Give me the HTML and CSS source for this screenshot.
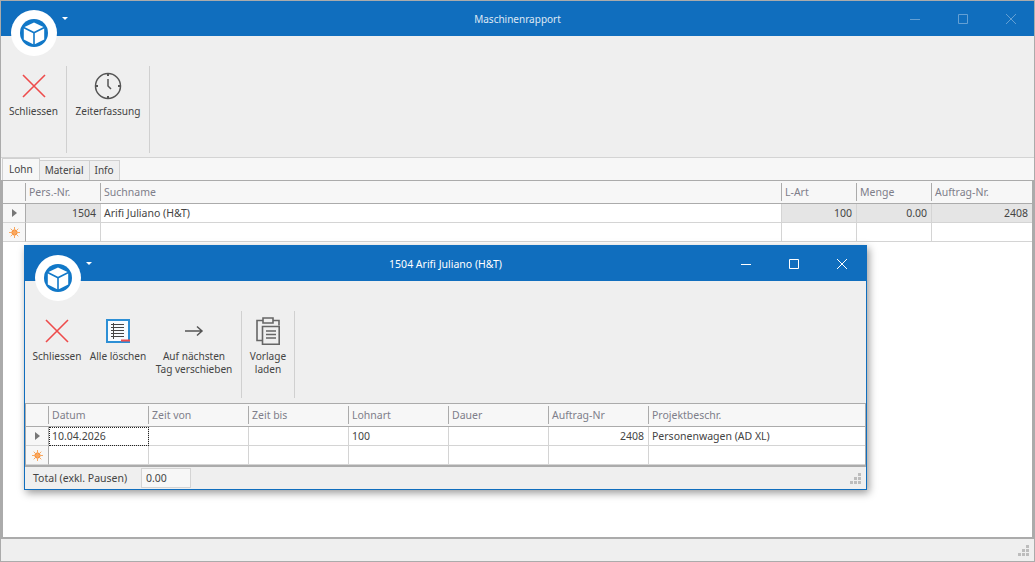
FILE: index.html
```html
<!DOCTYPE html>
<html lang="de">
<head>
    <meta charset="UTF-8">
    <title>Maschinenrapport</title>
    <link rel="stylesheet" href="styles.css">
</head>
<body>
    <svg class="sprites" width="0" height="0">
        <symbol id="logo" viewBox="0 0 46 46">
            <circle cx="23" cy="23" r="23" fill="#fff"/>
            <circle cx="23" cy="23" r="14" fill="#1178c8"/>
            <path d="M23 12.5l9.5 4.6-9.5 4.6-9.5-4.6z" fill="#fff"/>
            <path d="M12.8 18.6l9.4 4.6v11l-9.4-4.7zM33.2 18.6l-9.4 4.6v11l9.4-4.7z" fill="#fff"/>
        </symbol>
        <symbol id="close-red" viewBox="0 0 24 24">
            <path d="M1 1l22 22M23 1L1 23" fill="none" stroke="#ee4b4b" stroke-width="1.6"/>
        </symbol>
        <symbol id="row-arrow" viewBox="0 0 5 8">
            <path d="M0 0l5 4-5 4z" fill="#777"/>
        </symbol>
        <symbol id="row-new" viewBox="0 0 11 11">
            <circle cx="5.5" cy="5.5" r="3" fill="#f7913a"/>
            <path d="M5.5 0v11M0 5.5h11M1.7 1.7l7.6 7.6M9.3 1.7l-7.6 7.6" stroke="#f9a860" stroke-width="1"/>
        </symbol>
        <symbol id="grip" viewBox="0 0 11 11">
            <path d="M8 0h3v3H8zM4 4h3v3H4zM8 4h3v3H8zM0 8h3v3H0zM4 8h3v3H4zM8 8h3v3H8z" fill="#bdbdbd"/>
        </symbol>
    </svg>

    <div class="window">
        <header class="titlebar main-title">
            <svg class="logo"><use href="#logo"/></svg>
            <span class="qat-arrow"></span>
            <span class="title">Maschinenrapport</span>
            <div class="win-buttons dim">
                <svg viewBox="0 0 10 10"><path d="M0 5.5h10" stroke="#fff"/></svg>
                <svg viewBox="0 0 10 10"><path d="M.5.5h9v9h-9z" fill="none" stroke="#fff"/></svg>
                <svg viewBox="0 0 10 10"><path d="M0 0l10 10M10 0L0 10" stroke="#fff"/></svg>
            </div>
        </header>

        <div class="ribbon main-ribbon">
            <div class="group">
                <button class="big-btn btn-close">
                    <svg class="icon"><use href="#close-red"/></svg>
                    <span>Schliessen</span>
                </button>
            </div>
            <div class="group">
                <button class="big-btn btn-time">
                    <svg class="icon clock" viewBox="0 0 28 28">
                        <circle cx="14" cy="14" r="12.5" fill="none" stroke="#555" stroke-width="1.5"/>
                        <path d="M14 1v3M14 24v3M1 14h3M24 14h3" stroke="#555" stroke-width="2"/>
                        <path d="M14 7v7l3 3" fill="none" stroke="#555" stroke-width="1.5"/>
                    </svg>
                    <span>Zeiterfassung</span>
                </button>
            </div>
        </div>

        <div class="tabs">
            <div class="tab active">Lohn</div>
            <div class="tab">Material</div>
            <div class="tab">Info</div>
        </div>

        <div class="grid-area">
            <table class="grid outer-grid">
                <colgroup>
                    <col class="c-ind"><col style="width:75px"><col><col style="width:75px"><col style="width:75px"><col style="width:100px">
                </colgroup>
                <thead>
                    <tr><th></th><th>Pers.-Nr.</th><th>Suchname</th><th>L-Art</th><th>Menge</th><th>Auftrag-Nr.</th></tr>
                </thead>
                <tbody>
                    <tr>
                        <td class="ind"><svg class="arrow"><use href="#row-arrow"/></svg></td>
                        <td class="num ro">1504</td><td>Arifi Juliano (H&amp;T)</td>
                        <td class="num ro">100</td><td class="num ro">0.00</td><td class="num ro">2408</td>
                    </tr>
                    <tr>
                        <td class="ind"><svg class="star"><use href="#row-new"/></svg></td>
                        <td></td><td></td><td></td><td></td><td></td>
                    </tr>
                </tbody>
            </table>
        </div>

        <footer class="statusbar">
            <svg class="grip"><use href="#grip"/></svg>
        </footer>
    </div>

    <!-- Detailfenster -->
    <div class="dialog">
        <header class="titlebar dialog-title">
            <svg class="logo"><use href="#logo"/></svg>
            <span class="qat-arrow"></span>
            <span class="title">1504 Arifi Juliano (H&amp;T)</span>
            <div class="win-buttons">
                <svg viewBox="0 0 10 10"><path d="M0 5.5h10" stroke="#fff"/></svg>
                <svg viewBox="0 0 10 10"><path d="M.5.5h9v9h-9z" fill="none" stroke="#fff"/></svg>
                <svg viewBox="0 0 10 10"><path d="M0 0l10 10M10 0L0 10" stroke="#fff"/></svg>
            </div>
        </header>

        <div class="ribbon dialog-ribbon">
            <div class="group">
                <button class="big-btn d-close">
                    <svg class="icon"><use href="#close-red"/></svg>
                    <span>Schliessen</span>
                </button>
                <button class="big-btn d-clear">
                    <svg class="icon" viewBox="0 0 24 24">
                        <path d="M1 1h22v22H1z" fill="#f7fbfe" stroke="#2d8fd5" stroke-width="2"/>
                        <path d="M5 5.5h13M5 8.5h13M5 11.5h13M5 14.5h13M5 17.5h13M7.5 4v16" stroke="#444"/>
                        <path d="M15 21.5h9" stroke="#ee4b4b" stroke-width="2"/>
                    </svg>
                    <span>Alle löschen</span>
                </button>
                <button class="big-btn d-move">
                    <svg class="icon" viewBox="0 0 24 24">
                        <path d="M3 12h17M15 7.5l5 4.5-5 4.5" fill="none" stroke="#555" stroke-width="1.5"/>
                    </svg>
                    <span>Auf nächsten<br>Tag verschieben</span>
                </button>
            </div>
            <div class="group">
                <button class="big-btn d-load">
                    <svg class="icon clip" viewBox="0 0 24 28">
                        <path d="M7 3.5H1v20h5" fill="none" stroke="#666" stroke-width="1.6"/>
                        <path d="M17 3.5h6v5" fill="none" stroke="#666" stroke-width="1.6"/>
                        <path d="M7 1h10v5H7z" fill="none" stroke="#666" stroke-width="1.6"/>
                        <path d="M6.5 9.5h16.7v17.7H6.5z" fill="none" stroke="#666" stroke-width="1.6"/>
                        <path d="M10 14h10M10 17.5h10M10 21h10" stroke="#666" stroke-width="1.4"/>
                    </svg>
                    <span>Vorlage<br>laden</span>
                </button>
            </div>
        </div>

        <div class="dialog-grid">
            <table class="grid">
                <colgroup>
                    <col class="c-ind"><col span="6" style="width:100px"><col>
                </colgroup>
                <thead>
                    <tr><th></th><th>Datum</th><th>Zeit von</th><th>Zeit bis</th><th>Lohnart</th><th>Dauer</th><th>Auftrag-Nr</th><th>Projektbeschr.</th></tr>
                </thead>
                <tbody>
                    <tr>
                        <td class="ind"><svg class="arrow"><use href="#row-arrow"/></svg></td>
                        <td class="focused">10.04.2026</td><td></td><td></td><td>100</td><td></td>
                        <td class="num">2408</td><td>Personenwagen (AD XL)</td>
                    </tr>
                    <tr>
                        <td class="ind"><svg class="star"><use href="#row-new"/></svg></td>
                        <td></td><td></td><td></td><td></td><td></td><td></td><td></td>
                    </tr>
                </tbody>
            </table>
        </div>

        <div class="dialog-footer">
            <span class="total-label">Total (exkl. Pausen)</span>
            <span class="total-box">0.00</span>
            <svg class="grip"><use href="#grip"/></svg>
        </div>
    </div>
</body>
</html>
```

FILE: styles.css
```css
* {
    box-sizing: border-box;
}
html, body {
    margin: 0;
    height: 562px;
    overflow: hidden;
}
body {
    position: relative;
    font-family: "Noto Sans", sans-serif;
    font-size: 10.5px;
    color: #444;
    background: #fff;
}
.sprites {
    position: absolute;
}
.window {
    height: 562px;
    display: flex;
    flex-direction: column;
    border: 1px solid #ababab;
    background: #fff;
}

/* Titelleiste */
.titlebar {
    position: relative;
    flex: none;
    height: 35px;
    background: #106ebe;
    display: flex;
    align-items: center;
    justify-content: center;
    color: #fff;
}
.main-title .title {
    font-size: 10px;
    opacity: 0.85;
}
.logo {
    position: absolute;
    left: 10px;
    top: 9px;
    width: 46px;
    height: 46px;
    z-index: 2;
}
.qat-arrow {
    position: absolute;
    left: 61px;
    top: 16px;
    border: 3px solid transparent;
    border-top-color: #fff;
    border-bottom-width: 0;
    border-left-width: 3.5px;
    border-right-width: 3.5px;
}
.win-buttons {
    position: absolute;
    right: 19px;
    top: 13px;
    display: flex;
    gap: 38px;
}
.win-buttons.dim {
    right: 18px;
}
.win-buttons svg {
    width: 10px;
    height: 10px;
    display: block;
}
.win-buttons.dim svg {
    opacity: 0.35;
}

/* Ribbon */
.ribbon {
    flex: none;
    display: flex;
    background: #efefef;
    padding-top: 30px;
    border-bottom: 1px solid #d4d4d4;
    font-size: 10.1px;
}
.main-ribbon {
    height: 122px;
}
.group {
    height: 87px;
    display: flex;
    border-right: 1px solid #d0d0d0;
    align-items: flex-start;
}
.big-btn {
    border: 0;
    background: none;
    padding: 0;
    font: inherit;
    color: inherit;
    line-height: 13px;
    text-align: center;
    white-space: nowrap;
    display: flex;
    flex-direction: column;
    align-items: center;
}
.big-btn .icon {
    display: block;
    width: 24px;
    height: 24px;
    margin-top: 8px;
    margin-bottom: 7px;
}
.big-btn .clock {
    width: 28px;
    height: 28px;
    margin-top: 6px;
    margin-bottom: 5px;
}
.big-btn .clip {
    width: 24px;
    height: 28px;
    margin-top: 6px;
    margin-bottom: 5px;
}
.btn-close {
    width: 65px;
}
.btn-time {
    width: 82px;
}

/* Tabs */
.tabs {
    flex: none;
    height: 22px;
    display: flex;
    align-items: flex-end;
    padding-left: 1px;
    background: #f7f7f7;
    font-size: 10px;
}
.tab {
    height: 20px;
    padding: 0 5px;
    line-height: 18px;
    background: #efefef;
    border: 1px solid #d0d0d0;
    border-bottom: 0;
    border-left: 0;
}
.tab.active {
    height: 22px;
    padding: 0 6px;
    line-height: 20px;
    background: #f7f7f7;
    border-left: 1px solid #d0d0d0;
}

/* Grid */
.grid-area {
    flex: 1;
    border: 2px solid #ababab;
    border-top-width: 1px;
    background: #fff;
}
.grid {
    width: 100%;
    border-collapse: separate;
    border-spacing: 0;
    table-layout: fixed;
}
.c-ind {
    width: 23px;
}
.grid th {
    height: 23px;
    padding: 0 3px;
    background: #f7f7f7;
    border-bottom: 1px solid #ababab;
    font-weight: normal;
    text-align: left;
    color: #7e7e8a;
    position: relative;
}
.grid th + th::before {
    content: "";
    position: absolute;
    left: -1px;
    top: 2px;
    bottom: 2px;
    width: 1px;
    background: #ababab;
}
.grid td {
    height: 19px;
    padding: 0 3px;
    border-right: 1px solid #d4d4d4;
    border-bottom: 1px solid #d4d4d4;
    white-space: nowrap;
    overflow: hidden;
}
.grid td.ind {
    background: #f7f7f7;
    border-right-color: #ababab;
    text-align: center;
    padding: 0;
}
.grid td:last-child {
    border-right: 0;
}
.grid td.num {
    text-align: right;
    padding-right: 4px;
}
.grid td.ro {
    background: #e5e5e5;
}
.grid td.focused {
    outline: 1px dotted #222;
    outline-offset: -1px;
}
.arrow {
    width: 5px;
    height: 8px;
    display: block;
    margin: 0 auto;
}
.star {
    width: 11px;
    height: 11px;
    display: block;
    margin: 0 auto;
}

/* Statusleiste */
.statusbar {
    flex: none;
    position: relative;
    height: 22px;
    background: #efefef;
}
.grip {
    position: absolute;
    right: 5px;
    bottom: 5px;
    width: 11px;
    height: 11px;
}

/* Detailfenster */
.dialog {
    position: absolute;
    left: 24px;
    top: 245px;
    width: 843px;
    height: 245px;
    display: flex;
    flex-direction: column;
    background: #efefef;
    border: 1px solid #106ebe;
    box-shadow: 2px 3px 8px rgba(0, 0, 0, 0.4);
}
.dialog-ribbon {
    height: 122px;
    border-bottom: 0;
}
.d-close {
    width: 64px;
}
.d-clear {
    width: 58px;
}
.d-move {
    width: 94px;
}
.d-load {
    width: 52px;
}
.dialog-grid {
    flex: none;
    height: 64px;
    border: 1px solid #ababab;
    border-bottom-width: 2px;
    background: #fff;
}
.dialog-footer {
    flex: 1;
    position: relative;
    display: flex;
    align-items: center;
    padding-left: 8px;
}
.total-label {
    width: 108px;
}
.total-box {
    width: 50px;
    height: 20px;
    line-height: 18px;
    padding-left: 4px;
    background: #f7f7f7;
    border: 1px solid #d4d4d4;
}
```
